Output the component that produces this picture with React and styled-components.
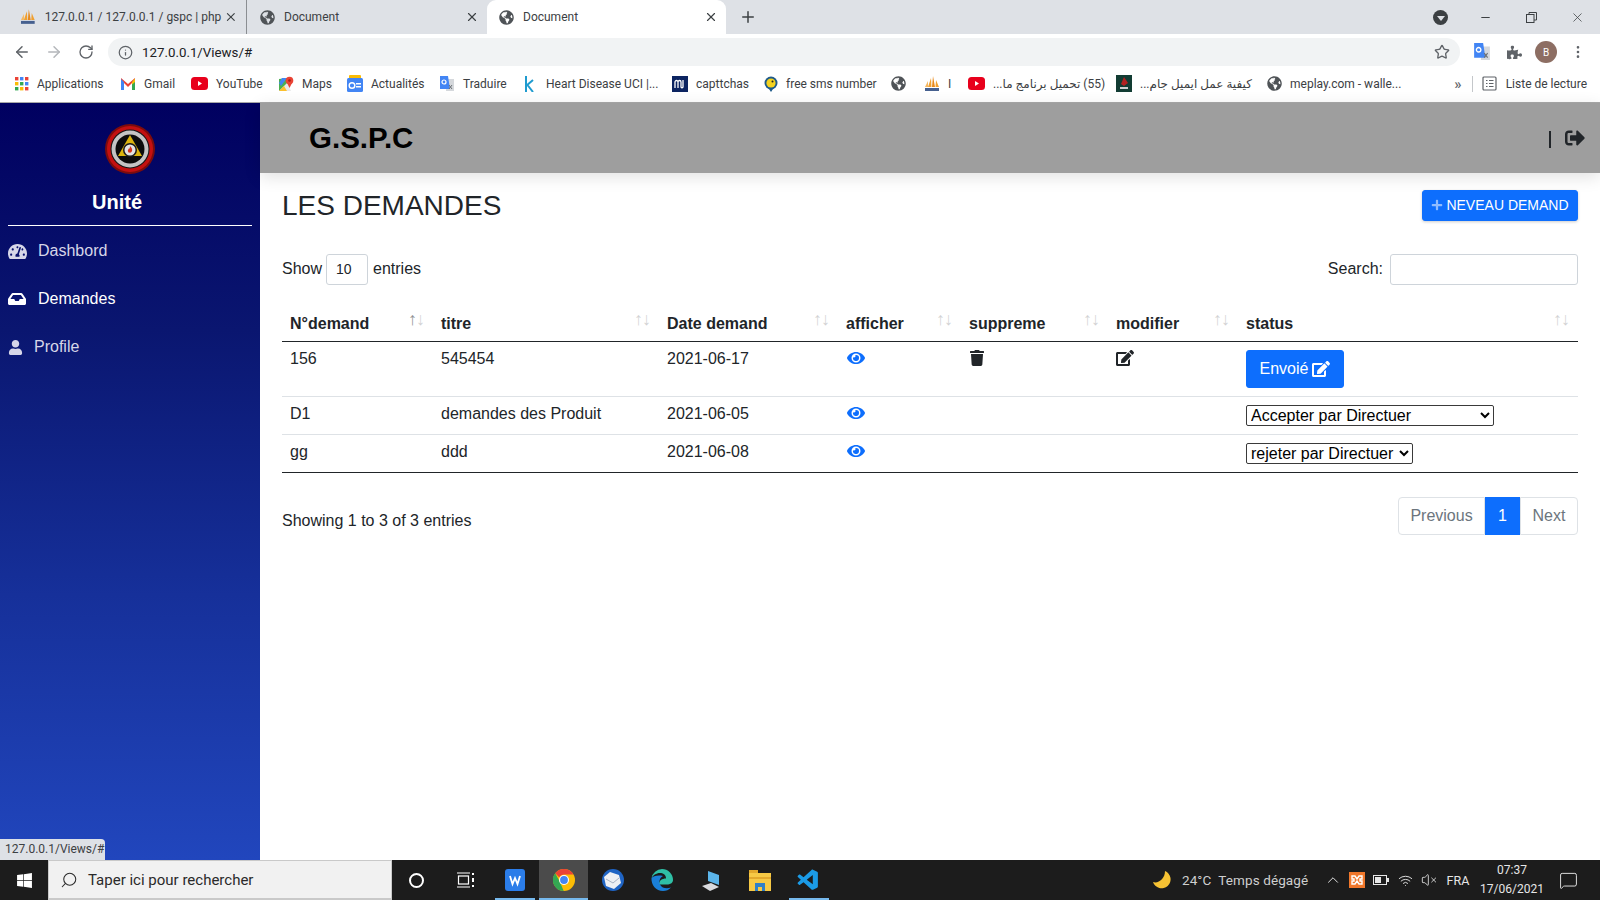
import React from 'react';
import styled, { createGlobalStyle } from 'styled-components';
import {
  FaTachometerAlt,
  FaInbox,
  FaUser,
  FaEye,
  FaTrash,
  FaEdit,
  FaSignOutAlt,
  FaPlus,
  FaGlobeAmericas,
  FaPuzzlePiece,
  FaWindows,
} from 'react-icons/fa';
import { VscVscode } from 'react-icons/vsc';
import { ArrowLeft, ArrowRight, RotateCw, Info, Star, X, Plus, Minus, MoreVertical, Search, ChevronUp, VolumeX, MessageSquare, Wifi } from 'lucide-react';

const GlobalStyle = createGlobalStyle`
  html, body { margin: 0; padding: 0; height: 100%; overflow: hidden; background: #fff; }
  * { box-sizing: border-box; }
  body { font-family: "Liberation Sans", Arial, sans-serif; font-size: 16px; color: #212529; }
`;

const uiFont = `Roboto, "Noto Sans", "DejaVu Sans", sans-serif`;

const Screen = styled.div`
  width: 1600px;
  height: 900px;
  display: flex;
  flex-direction: column;
  overflow: hidden;
`;

/* browser chrome */
const TabBar = styled.div`
  height: 34px;
  background: #dee1e6;
  display: flex;
  align-items: flex-end;
  font-family: ${uiFont};
  font-size: 12px;
  color: #3c4043;
`;

const Tab = styled.div`
  width: ${p => p.$w}px;
  height: 34px;
  padding: 0 8px 0 ${p => p.$pl || 12}px;
  display: flex;
  align-items: center;
  gap: 9px;
  background: ${p => (p.$active ? '#fff' : 'transparent')};
  border-radius: ${p => (p.$active ? '9px 9px 0 0' : '0')};
  border-right: ${p => (p.$sep ? '1px solid #8b8e92' : '0')};
  background-clip: padding-box;
`;

const TabTitle = styled.span`
  flex: 1;
  margin-right: -6px;
  white-space: nowrap;
`;

const NewTab = styled.div`
  width: 44px;
  display: flex;
  justify-content: center;
  align-self: center;
  color: #3c4043;
`;

const WindowControls = styled.div`
  margin-left: auto;
  align-self: center;
  display: flex;
  align-items: center;
  color: #3c4043;
`;

const ProfileDrop = styled.div`
  width: 15px;
  height: 15px;
  margin-right: 14px;
  border-radius: 50%;
  background: #3c4043;
  display: flex;
  align-items: center;
  justify-content: center;
  &::after {
    content: '';
    border-left: 4px solid transparent;
    border-right: 4px solid transparent;
    border-top: 5px solid #dee1e6;
    margin-top: 2px;
  }
`;

const WinButton = styled.div`
  width: 46px;
  display: flex;
  justify-content: center;
`;

const Toolbar = styled.div`
  height: 34px;
  padding-top: 2px;
  background: #fff;
  display: flex;
  align-items: center;
  font-family: ${uiFont};
  color: #5f6368;
`;

const NavSlot = styled.div`
  width: 32px;
  display: flex;
  justify-content: center;
  color: ${p => (p.$off ? '#b4b7bb' : '#5f6368')};
  margin-left: ${p => p.$ml || 0}px;
`;

const Omnibox = styled.div`
  width: 1352px;
  height: 28px;
  margin-left: 6px;
  padding: 0 10px;
  border-radius: 14px;
  background: #f1f3f4;
  display: flex;
  align-items: center;
  gap: 9px;
  font-size: 13.3px;
  color: #202124;
`;

const OmniStar = styled.span`
  margin-left: auto;
  display: flex;
  color: #5f6368;
`;

const Avatar = styled.div`
  width: 22px;
  height: 22px;
  border-radius: 50%;
  background: #8d6e63;
  color: #fff;
  font-size: 10px;
  display: flex;
  align-items: center;
  justify-content: center;
  margin: 0 13px 0 5px;
`;

const ToolIcon = styled.div`
  width: 32px;
  margin-left: ${p => p.$ml || 0}px;
  display: flex;
  justify-content: center;
`;

const Bookmarks = styled.div`
  height: 35px;
  padding: 0 0 3px 15px;
  background: #fff;
  border-bottom: 1px solid #a8a8a8;
  display: flex;
  align-items: center;
  font-family: ${uiFont};
  font-size: 12px;
  color: #3c4043;
  white-space: nowrap;
`;

const Bookmark = styled.div`
  width: ${p => p.$w}px;
  flex: none;
  display: flex;
  align-items: center;
  gap: 8px;
`;

const BookmarkEnd = styled.div`
  margin-left: auto;
  display: flex;
  align-items: center;
  gap: 9px;
  padding-right: 13px;
`;

const Chevrons = styled.span`
  font-size: 15px;
  font-weight: 500;
  color: #5f6368;
  margin-right: 1px;
`;

const BarSep = styled.span`
  width: 1px;
  height: 16px;
  background: #c4c7ca;
`;

/* page */
const Page = styled.div`
  flex: 1;
  display: flex;
  min-height: 0;
  position: relative;
`;

const Sidebar = styled.aside`
  width: 260px;
  flex: none;
  padding: 21px 8px 0;
  background: linear-gradient(180deg, #000060 0%, #0a1670 30%, #16309a 65%, #2146bd 100%);
  color: #fff;
`;

const LogoWrap = styled.div`
  display: flex;
  justify-content: center;
`;

const Brand = styled.div`
  margin-top: 12px;
  padding: 0 26px 0 0;
  height: 32px;
  line-height: 32px;
  text-align: center;
  font-size: 20px;
  font-weight: 700;
`;

const SideDivider = styled.hr`
  margin: 7px 0 0;
  border: 0;
  border-top: 1px solid #fff;
`;

const SideNav = styled.nav`
  display: flex;
  flex-direction: column;
  padding-top: 13px;
  gap: 24px;
`;

const SideLink = styled.a`
  height: 24px;
  display: flex;
  align-items: center;
  gap: ${p => p.$gap}px;
  color: ${p => (p.$active ? '#fff' : '#d6d6e8')};
  font-size: 16px;
`;

const StatusBubble = styled.div`
  position: absolute;
  left: 0;
  bottom: 0;
  width: 105px;
  height: 21px;
  padding: 3px 0 0 5px;
  background: #dee1e6;
  border-top-right-radius: 4px;
  font-family: ${uiFont};
  font-size: 12px;
  color: #3c4043;
`;

const Workspace = styled.div`
  flex: 1;
  min-width: 0;
  display: flex;
  flex-direction: column;
`;

const Header = styled.header`
  height: 70px;
  flex: none;
  padding: 0 0 0 49px;
  background: #9e9e9e;
  display: flex;
  align-items: center;
  box-shadow: 0 4px 16px rgba(0, 0, 0, 0.12);
`;

const AppTitle = styled.h1`
  margin: 0;
  font-size: 29.5px;
  font-weight: 700;
  color: #000;
`;

const HeaderEnd = styled.div`
  margin-left: auto;
  display: flex;
  align-items: center;
  gap: 14px;
  padding-right: 15px;
  color: #212529;
`;

const HeaderBar = styled.span`
  width: 2px;
  height: 17px;
  background: #212529;
  margin-top: 3px;
`;

const Main = styled.main`
  flex: 1;
  padding: 17px 22px 0;
`;

const TitleRow = styled.div`
  height: 31px;
  display: flex;
  align-items: center;
  justify-content: space-between;
`;

const PageTitle = styled.h3`
  margin: 0;
  font-size: 28px;
  font-weight: 400;
  color: #212529;
`;

const PrimaryButton = styled.button`
  border: 1px solid #0d6efd;
  border-radius: 3px;
  background: #0d6efd;
  color: #fff;
  font-family: inherit;
  font-size: ${p => (p.$small ? 14 : 16)}px;
  height: ${p => (p.$small ? 31 : 38)}px;
  width: ${p => (p.$small ? 156 : 98)}px;
  padding: 0 0 ${p => (p.$small ? 2 : 0)}px;
  display: flex;
  align-items: center;
  justify-content: center;
  gap: ${p => (p.$small ? 3 : 4)}px;
  box-shadow: ${p => (p.$small ? '0 1px 3px rgba(0,0,0,.2)' : 'none')};
`;

const FilterRow = styled.div`
  margin-top: 33px;
  height: 31px;
  display: flex;
  align-items: center;
  justify-content: space-between;
`;

const Field = styled.label`
  display: flex;
  align-items: center;
  gap: ${p => p.$gap}px;
`;

const Caption = styled.span`
  margin: 0 0 2px ${p => p.$ml || 0}px;
`;

const TextInput = styled.input`
  width: ${p => p.$w}px;
  height: 31px;
  padding: 0 9px 2px;
  border: 1px solid #ced4da;
  border-radius: 3px;
  font-family: inherit;
  font-size: 14px;
  color: #212529;
  background: #fff;
`;

const Table = styled.table`
  width: 1296px;
  margin-top: 15px;
  border-collapse: collapse;
  table-layout: fixed;
  line-height: 18px;
`;

const Th = styled.th`
  width: ${p => p.$w}px;
  padding: 15px 8px 8px;
  border-bottom: 1px solid #212529;
  text-align: left;
  font-weight: 700;
`;

const ThInner = styled.div`
  display: flex;
  justify-content: space-between;
`;

const SortArrows = styled.span`
  display: flex;
  margin-top: -5px;
  font-weight: 400;
  font-size: 18px;
  line-height: 18px;
`;

const Arrow = styled.span`
  color: #212529;
  opacity: ${p => (p.$on ? 0.5 : 0.2)};
  margin-left: -1px;
`;

const Td = styled.td`
  padding: 8px;
  vertical-align: top;
  border-bottom: 1px solid ${p => (p.$last ? '#212529' : '#dee2e6')};
`;

const EyeLink = styled.span`
  display: flex;
  margin: -1px 0 0 1px;
  color: #0d6efd;
`;

const DarkIcon = styled.span`
  display: flex;
  margin-top: ${p => p.$mt || 0}px;
  color: #212529;
`;

const StatusSelect = styled.select`
  display: block;
  width: ${p => p.$w}px;
  height: 21px;
  padding: 0;
  border: 1px solid #3a3a3a;
  border-radius: 2px;
  background: #fff;
  font-family: inherit;
  font-size: 16px;
  color: #000;
`;

const FooterRow = styled.div`
  margin-top: 24px;
  display: flex;
  align-items: center;
  justify-content: space-between;
`;

const EntriesInfo = styled.span`
  margin-top: 10px;
`;

const Pager = styled.div`
  display: flex;
`;

const PageItem = styled.div`
  width: ${p => p.$w}px;
  height: 38px;
  display: flex;
  align-items: center;
  justify-content: center;
  border: 1px solid ${p => (p.$active ? '#0d6efd' : '#dee2e6')};
  border-radius: ${p => p.$radius || '0'};
  background: ${p => (p.$active ? '#0d6efd' : '#fff')};
  color: ${p => (p.$active ? '#fff' : '#6c757d')};
`;

/* taskbar */
const Taskbar = styled.div`
  height: 40px;
  flex: none;
  background: #1c1c1c;
  display: flex;
  align-items: stretch;
  font-family: ${uiFont};
  color: #e0e0e0;
`;

const StartSlot = styled.div`
  width: 48px;
  display: flex;
  align-items: center;
  justify-content: center;
  color: #fff;
`;

const SearchBox = styled.div`
  width: 344px;
  padding-left: 11px;
  background: #f1f1f1;
  border: 1px solid #c9c9c9;
  border-bottom-width: 2px;
  display: flex;
  align-items: center;
  gap: 10px;
  color: #2a2a2a;
  font-size: 15px;
`;

const MirrorSearch = styled(Search)`
  transform: scaleX(-1);
`;

const TaskSlot = styled.div`
  width: 49px;
  display: flex;
  align-items: center;
  justify-content: center;
  background-color: ${p => (p.$active ? '#4b4b4b' : 'transparent')};
  background-image: ${p => (p.$open ? 'linear-gradient(#76b9ed, #76b9ed)' : 'none')};
  background-repeat: no-repeat;
  background-position: center bottom;
  background-size: ${p => (p.$active ? '100%' : '40px')} 2px;
`;

const CortanaRing = styled.span`
  width: 15px;
  height: 15px;
  border: 2.5px solid #fff;
  border-radius: 50%;
`;

const Tray = styled.div`
  margin-left: auto;
  display: flex;
  align-items: center;
  font-size: 13.5px;
  color: #cfcfcf;
`;

const TrayItem = styled.div`
  width: ${p => p.$w}px;
  display: flex;
  justify-content: center;
  color: #e6e6e6;
`;

const Weather = styled.span`
  width: 142px;
  padding-left: 3px;
  white-space: nowrap;
  letter-spacing: 0.1px;
`;

const Clock = styled.div`
  width: 74px;
  text-align: center;
  font-size: 12px;
  line-height: 19px;
  color: #e6e6e6;
`;

const Lang = styled.span`
  width: 34px;
  text-align: center;
  font-size: 12.5px;
  color: #e6e6e6;
`;

/* drawings */
const PmaIcon = () => (
  <svg width="16" height="16" viewBox="0 0 16 16">
    <path d="M4 11 L7 2 L7.5 11Z" fill="#f0a030" />
    <path d="M8 11 L9 0 L11 11Z" fill="#e8891c" />
    <path d="M11.5 11 L12 4 L15 11Z" fill="#f0a030" />
    <path d="M1 11 L4 5 L4 11Z" fill="#f5b860" />
    <rect x="1" y="12" width="14" height="3" fill="#46608f" />
  </svg>
);

const GlobeIcon = () => <FaGlobeAmericas size={15} color="#4f5357" />;

const AppsIcon = () => (
  <svg width="14" height="14" viewBox="0 0 14 14">
    {[0, 5, 10].map((y, r) =>
      [0, 5, 10].map((x, c) => (
        <rect key={`${r}-${c}`} x={x} y={y} width="3.4" height="3.4" fill={[['#ea4335', '#4285f4', '#ea4335'], ['#fbbc05', '#34a853', '#4285f4'], ['#34a853', '#fbbc05', '#ea4335']][r][c]} />
      ))
    )}
  </svg>
);

const GmailIcon = () => (
  <svg width="16" height="13" viewBox="0 0 16 13">
    <path d="M1 13V1l7 6 7-6v12h-3V6L8 10 4 6v7z" fill="#ea4335" />
    <path d="M1 13V2l3 3v8z" fill="#4285f4" />
    <path d="M15 13V2l-3 3v8z" fill="#34a853" />
    <path d="M12 5l3-3.500V5l-3 2.500z" fill="#fbbc05" />
  </svg>
);

const YoutubeIcon = () => (
  <svg width="17" height="13" viewBox="0 0 17 13">
    <rect width="17" height="13" rx="3.5" fill="#e8001c" />
    <path d="M7 4l4 2.5L7 9z" fill="#fff" />
  </svg>
);

const MapsIcon = () => (
  <svg width="16" height="16" viewBox="0 0 16 16">
    <path d="M1 3l8-1v13H1z" fill="#4caf50" />
    <path d="M1 15L9 7l4 8z" fill="#e8e8e8" />
    <path d="M4 2h5l-6 8-2-3z" fill="#4285f4" />
    <path d="M1 15l5-5 3 5z" fill="#fbc02d" />
    <circle cx="11.5" cy="4.5" r="3.8" fill="#ea4335" />
    <circle cx="11.5" cy="4.5" r="1.3" fill="#a61c14" />
    <path d="M9 7l2.5 5L14 7z" fill="#ea4335" />
  </svg>
);

const NewsIcon = () => (
  <svg width="16" height="17" viewBox="0 0 16 17">
    <rect x="2" y="0" width="12" height="6" rx="1" fill="#fbbc05" />
    <rect x="0" y="3" width="16" height="14" rx="1.5" fill="#4285f4" />
    <rect x="9" y="8" width="5" height="1.5" fill="#fff" />
    <rect x="9" y="11" width="5" height="1.5" fill="#fff" />
    <circle cx="5" cy="10.5" r="2.8" fill="none" stroke="#fff" strokeWidth="1.4" />
  </svg>
);

const TranslateIcon = ({ size = 16 }) => (
  <svg width={size} height={size} viewBox="0 0 16 16">
    <path d="M8 3h7v12H7z" fill="#d5d8dc" />
    <path d="M1 0h8l2 13H1z" fill="#4285f4" />
    <circle cx="5" cy="6" r="2" fill="none" stroke="#fff" strokeWidth="1.2" />
    <path d="M10 9l3 4M13 9l-3 4" stroke="#6b7075" strokeWidth="1" />
  </svg>
);

const KaggleIcon = () => (
  <svg width="13" height="16" viewBox="0 0 13 16">
    <path d="M1 0v16M1 10l7-6M2.500 9L8 16" fill="none" stroke="#1f9bcf" strokeWidth="2" />
  </svg>
);

const MuIcon = () => (
  <svg width="16" height="16" viewBox="0 0 16 16">
    <rect width="16" height="16" fill="#0c2461" />
    <path d="M3 12V6c0-2 3-2 3 0v6M6 6c0-2 3-2 3 0v5c0 1 2 1 2 0V4" fill="none" stroke="#fff" strokeWidth="1.3" />
  </svg>
);

const DuckIcon = () => (
  <svg width="14" height="16" viewBox="0 0 14 16">
    <circle cx="7" cy="7" r="6.5" fill="#1e5a8a" />
    <circle cx="7" cy="7" r="4.6" fill="#f4d21f" />
    <circle cx="8.500" cy="5.500" r="1" fill="#222" />
    <path d="M5 13l2 3 2-3z" fill="#1e5a8a" />
  </svg>
);

const DarkBookIcon = () => (
  <svg width="16" height="17" viewBox="0 0 16 17">
    <rect width="16" height="17" fill="#123c33" />
    <path d="M8 2l4 6-4 3-3-2z" fill="#b32020" />
    <path d="M4 12h8v2H4z" fill="#cfcfcf" />
  </svg>
);

const ListIcon = () => (
  <svg width="15" height="15" viewBox="0 0 15 15" fill="none" stroke="#5f6368" strokeWidth="1.2">
    <rect x="1" y="1" width="13" height="13" rx="1" />
    <path d="M4 4.500h1.500M7 4.500h4.500M4 7.500h1.500M7 7.500h4.500M4 10.500h1.500M7 10.500h4.500" />
  </svg>
);

const RestoreIcon = () => (
  <svg width="11" height="11" viewBox="0 0 11 11" fill="none" stroke="#3c4043" strokeWidth="1">
    <rect x="0.500" y="2.500" width="7.500" height="8" />
    <path d="M3 2.500V.5h7.500V8H8" />
  </svg>
);

const UnitLogo = () => (
  <svg width="50" height="50" viewBox="0 0 50 50">
    <circle cx="25" cy="25" r="25" fill="#7c0c0c" />
    <circle cx="25" cy="25" r="23" fill="#c31010" />
    <circle cx="25" cy="25" r="19.500" fill="#151515" />
    <circle cx="25" cy="25" r="18.500" fill="#c4c4c4" />
    <circle cx="25" cy="25" r="14.500" fill="#0c0c0c" />
    <path d="M25 11L37 32H13z" fill="#dcb40e" />
    <circle cx="25" cy="26" r="7" fill="#1a1a1a" />
    <circle cx="25" cy="26" r="5.500" fill="#e4e4e4" />
    <path d="M25 22c2 2 3 4 1.500 6-1 1-3 1-3.500-.5-.5-1.500.5-2 .8-3 .6.500 1.200-.5 1.200-2.500z" fill="#d8341e" />
  </svg>
);

const WpsIcon = () => (
  <svg width="20" height="22" viewBox="0 0 20 22">
    <rect width="20" height="22" rx="3" fill="#2b7de9" />
    <path d="M5 7l2.500 8L10 9l2.500 6L15 7" fill="none" stroke="#fff" strokeWidth="1.8" />
  </svg>
);

const ChromeIcon = () => (
  <svg width="22" height="22" viewBox="0 0 22 22">
    <circle cx="11" cy="11" r="11" fill="#fbbc05" />
    <path d="M11 0a11 11 0 0 1 9.500 5.500H11a5.500 5.500 0 0 0-4.800 2.700L2.200 4.200A11 11 0 0 1 11 0z" fill="#ea4335" />
    <path d="M2.200 4.200l4.500 8.200 4 9.600A11 11 0 0 1 2.200 4.200z" fill="#34a853" />
    <circle cx="11" cy="11" r="5" fill="#fff" />
    <circle cx="11" cy="11" r="3.900" fill="#4285f4" />
  </svg>
);

const MailBirdIcon = () => (
  <svg width="24" height="24" viewBox="0 0 24 24">
    <circle cx="12" cy="12" r="11" fill="#1f64c4" />
    <path d="M3 9l6-5 9 3 2 8-7 6-8-3z" fill="#eef0f4" />
    <path d="M5 11l7 4 6-5" fill="none" stroke="#a9b4c4" strokeWidth="1" />
  </svg>
);

const EdgeIcon = () => (
  <svg width="24" height="24" viewBox="0 0 24 24">
    <path d="M12 1a11 11 0 0 1 11 11c0 3-3 4.500-6 4.500H9c0-4 3-6 7-6 0-4-3-5.500-6-5.500-4 0-7 2.500-8.500 5A11 11 0 0 1 12 1z" fill="#2fc0a6" />
    <path d="M1.500 10C1 17 6 23 13 23c3 0 6-1 8-3.500-4 1.500-9 1-11-3-1.500-3 0-7 3-8.500-5-1-10 0-11.500 2z" fill="#1a7fd8" />
  </svg>
);

const PcIcon = () => (
  <svg width="24" height="24" viewBox="0 0 24 24">
    <path d="M9 3l11 4v10L9 13z" fill="#5bb5ea" />
    <path d="M3 18l9-3 8 4-9 4z" fill="#d9dbde" />
  </svg>
);

const FolderIcon = () => (
  <svg width="22" height="21" viewBox="0 0 22 21">
    <rect y="0" width="9" height="4" fill="#e3a92c" />
    <rect y="3" width="22" height="18" fill="#f6c945" />
    <rect y="7" width="22" height="2" fill="#e3a92c" />
    <path d="M6 21v-8h10v8h-3v-4h-4v4z" fill="#2f80c9" />
  </svg>
);

const MoonIcon = () => (
  <svg width="20" height="20" viewBox="0 0 20 20">
    <path d="M13 1a9 9 0 1 1-12 11c5 2 12-3 12-11z" fill="#f6c233" />
  </svg>
);

const XamppIcon = () => (
  <svg width="16" height="16" viewBox="0 0 16 16">
    <rect width="16" height="16" fill="#f0772b" />
    <path d="M3 4h3l2 3 2-3h3v3h-2v2h2v3h-3L8 9l-2 3H3V9h2V7H3z" fill="none" stroke="#fff" strokeWidth="1.4" />
  </svg>
);

const BatteryIcon = () => (
  <svg width="16" height="10" viewBox="0 0 16 10">
    <rect x="0.500" y="0.500" width="13" height="9" fill="none" stroke="#e6e6e6" />
    <rect x="2" y="2" width="6" height="6" fill="#e6e6e6" />
    <rect x="14" y="3" width="2" height="4" fill="#e6e6e6" />
  </svg>
);

const TaskViewIcon = () => (
  <svg width="18" height="16" viewBox="0 0 18 16" fill="none" stroke="#fff" strokeWidth="1.2">
    <rect x="1.500" y="4" width="10" height="8" />
    <path d="M0 1h13M0 15h13" />
    <path d="M16 1v2M16 6v4M16 13v2" strokeWidth="2" />
  </svg>
);

/* data */
const columns = [
  { label: 'N°demand', w: 151, on: true },
  { label: 'titre', w: 226 },
  { label: 'Date demand', w: 179 },
  { label: 'afficher', w: 123 },
  { label: 'suppreme', w: 147 },
  { label: 'modifier', w: 130 },
  { label: 'status', w: 340 },
];

const bookmarks = [
  { icon: <AppsIcon />, text: 'Applications', w: 105 },
  { icon: <GmailIcon />, text: 'Gmail', w: 71 },
  { icon: <YoutubeIcon />, text: 'YouTube', w: 87 },
  { icon: <MapsIcon />, text: 'Maps', w: 69 },
  { icon: <NewsIcon />, text: 'Actualités', w: 92 },
  { icon: <TranslateIcon />, text: 'Traduire', w: 86 },
  { icon: <KaggleIcon />, text: 'Heart Disease UCI |...', w: 147 },
  { icon: <MuIcon />, text: 'capttchas', w: 92 },
  { icon: <DuckIcon />, text: 'free sms number', w: 127 },
  { icon: <GlobeIcon />, text: '', w: 33 },
  { icon: <PmaIcon />, text: 'I', w: 44 },
  { icon: <YoutubeIcon />, text: '(55) تحميل برنامج ما...', w: 148, rtl: true },
  { icon: <DarkBookIcon />, text: 'كيفية عمل ايميل جام...', w: 151, rtl: true },
  { icon: <GlobeIcon />, text: 'meplay.com - walle...', w: 150 },
];

const rows = [
  { id: '156', title: '545454', date: '2021-06-17', owner: true },
  { id: 'D1', title: 'demandes des Produit', date: '2021-06-05', status: 'Accepter par Directuer', selectW: 248 },
  { id: 'gg', title: 'ddd', date: '2021-06-08', status: 'rejeter par Directuer', selectW: 167 },
];

const App = () => (
  <Screen>
    <GlobalStyle />
    <TabBar>
      <Tab $w={247} $pl={20} $sep>
        <PmaIcon />
        <TabTitle>127.0.0.1 / 127.0.0.1 / gspc | php</TabTitle>
        <X size={14} />
      </Tab>
      <Tab $w={240} $pl={13}>
        <GlobeIcon />
        <TabTitle>Document</TabTitle>
        <X size={14} />
      </Tab>
      <Tab $w={239} $pl={12} $active>
        <GlobeIcon />
        <TabTitle>Document</TabTitle>
        <X size={14} />
      </Tab>
      <NewTab>
        <Plus size={18} />
      </NewTab>
      <WindowControls>
        <ProfileDrop />
        <WinButton>
          <Minus size={13} />
        </WinButton>
        <WinButton>
          <RestoreIcon />
        </WinButton>
        <WinButton>
          <X size={15} strokeWidth={1.2} />
        </WinButton>
      </WindowControls>
    </TabBar>
    <Toolbar>
      <NavSlot $ml={6}>
        <ArrowLeft size={18} />
      </NavSlot>
      <NavSlot $off>
        <ArrowRight size={18} />
      </NavSlot>
      <NavSlot>
        <RotateCw size={16} />
      </NavSlot>
      <Omnibox>
        <Info size={15} color="#5f6368" />
        127.0.0.1/Views/#
        <OmniStar>
          <Star size={16} />
        </OmniStar>
      </Omnibox>
      <ToolIcon $ml={6}>
        <TranslateIcon size={18} />
      </ToolIcon>
      <ToolIcon>
        <FaPuzzlePiece size={15} color="#5f6368" />
      </ToolIcon>
      <Avatar>B</Avatar>
      <MoreVertical size={16} />
    </Toolbar>
    <Bookmarks>
      {bookmarks.map((b, i) => (
        <Bookmark key={i} $w={b.w}>
          {b.icon}
          <span dir={b.rtl ? 'rtl' : 'ltr'}>{b.text}</span>
        </Bookmark>
      ))}
      <BookmarkEnd>
        <Chevrons>»</Chevrons>
        <BarSep />
        <ListIcon />
        <span>Liste de lecture</span>
      </BookmarkEnd>
    </Bookmarks>
    <Page>
      <Sidebar>
        <LogoWrap>
          <UnitLogo />
        </LogoWrap>
        <Brand>Unité</Brand>
        <SideDivider />
        <SideNav>
          <SideLink $gap={11}>
            <FaTachometerAlt size={19} />
            Dashbord
          </SideLink>
          <SideLink $gap={12} $active>
            <FaInbox size={18} />
            Demandes
          </SideLink>
          <SideLink $gap={11}>
            <FaUser size={15} />
            Profile
          </SideLink>
        </SideNav>
      </Sidebar>
      <Workspace>
        <Header>
          <AppTitle>G.S.P.C</AppTitle>
          <HeaderEnd>
            <HeaderBar />
            <FaSignOutAlt size={20} />
          </HeaderEnd>
        </Header>
        <Main>
          <TitleRow>
            <PageTitle>LES DEMANDES</PageTitle>
            <PrimaryButton $small>
              <FaPlus size={12} color="#8fbcff" />
              NEVEAU DEMAND
            </PrimaryButton>
          </TitleRow>
          <FilterRow>
            <Field $gap={4}>
              <Caption>Show</Caption>
              <TextInput $w={42} readOnly value="10" />
              <Caption $ml={1}>entries</Caption>
            </Field>
            <Field $gap={7}>
              <Caption>Search:</Caption>
              <TextInput $w={188} />
            </Field>
          </FilterRow>
          <Table>
            <thead>
              <tr>
                {columns.map(c => (
                  <Th key={c.label} $w={c.w}>
                    <ThInner>
                      {c.label}
                      <SortArrows>
                        <Arrow $on={c.on}>↑</Arrow>
                        <Arrow>↓</Arrow>
                      </SortArrows>
                    </ThInner>
                  </Th>
                ))}
              </tr>
            </thead>
            <tbody>
              {rows.map((r, i) => {
                const last = i === rows.length - 1;
                return (
                  <tr key={r.id}>
                    <Td $last={last}>{r.id}</Td>
                    <Td $last={last}>{r.title}</Td>
                    <Td $last={last}>{r.date}</Td>
                    <Td $last={last}>
                      <EyeLink>
                        <FaEye size={18} />
                      </EyeLink>
                    </Td>
                    <Td $last={last}>
                      {r.owner && (
                        <DarkIcon>
                          <FaTrash size={16} />
                        </DarkIcon>
                      )}
                    </Td>
                    <Td $last={last}>
                      {r.owner && (
                        <DarkIcon $mt={-1}>
                          <FaEdit size={18} />
                        </DarkIcon>
                      )}
                    </Td>
                    <Td $last={last}>
                      {r.owner ? (
                        <PrimaryButton>
                          Envoié
                          <FaEdit size={18} />
                        </PrimaryButton>
                      ) : (
                        <StatusSelect $w={r.selectW} defaultValue={r.status}>
                          <option>{r.status}</option>
                        </StatusSelect>
                      )}
                    </Td>
                  </tr>
                );
              })}
            </tbody>
          </Table>
          <FooterRow>
            <EntriesInfo>Showing 1 to 3 of 3 entries</EntriesInfo>
            <Pager>
              <PageItem $w={87} $radius="4px 0 0 4px">Previous</PageItem>
              <PageItem $w={35} $active>1</PageItem>
              <PageItem $w={58} $radius="0 4px 4px 0">Next</PageItem>
            </Pager>
          </FooterRow>
        </Main>
      </Workspace>
      <StatusBubble>127.0.0.1/Views/#</StatusBubble>
    </Page>
    <Taskbar>
      <StartSlot>
        <FaWindows size={17} />
      </StartSlot>
      <SearchBox>
        <MirrorSearch size={18} strokeWidth={1.4} />
        Taper ici pour rechercher
      </SearchBox>
      <TaskSlot>
        <CortanaRing />
      </TaskSlot>
      <TaskSlot>
        <TaskViewIcon />
      </TaskSlot>
      <TaskSlot $open>
        <WpsIcon />
      </TaskSlot>
      <TaskSlot $active $open>
        <ChromeIcon />
      </TaskSlot>
      <TaskSlot>
        <MailBirdIcon />
      </TaskSlot>
      <TaskSlot>
        <EdgeIcon />
      </TaskSlot>
      <TaskSlot>
        <PcIcon />
      </TaskSlot>
      <TaskSlot>
        <FolderIcon />
      </TaskSlot>
      <TaskSlot $open>
        <VscVscode size={25} color="#1b9be6" />
      </TaskSlot>
      <Tray>
        <TrayItem $w={34}>
          <MoonIcon />
        </TrayItem>
        <Weather>24°C&nbsp;&nbsp;Temps dégagé</Weather>
        <TrayItem $w={24}>
          <ChevronUp size={18} strokeWidth={1.3} />
        </TrayItem>
        <TrayItem $w={24}>
          <XamppIcon />
        </TrayItem>
        <TrayItem $w={24}>
          <BatteryIcon />
        </TrayItem>
        <TrayItem $w={24}>
          <Wifi size={15} strokeWidth={1.5} />
        </TrayItem>
        <TrayItem $w={24}>
          <VolumeX size={16} strokeWidth={1.3} />
        </TrayItem>
        <Lang>FRA</Lang>
        <Clock>
          07:37
          <br />
          17/06/2021
        </Clock>
        <TrayItem $w={39}>
          <MessageSquare size={19} strokeWidth={1.2} />
        </TrayItem>
        <TrayItem $w={12} />
      </Tray>
    </Taskbar>
  </Screen>
);

export default App;
